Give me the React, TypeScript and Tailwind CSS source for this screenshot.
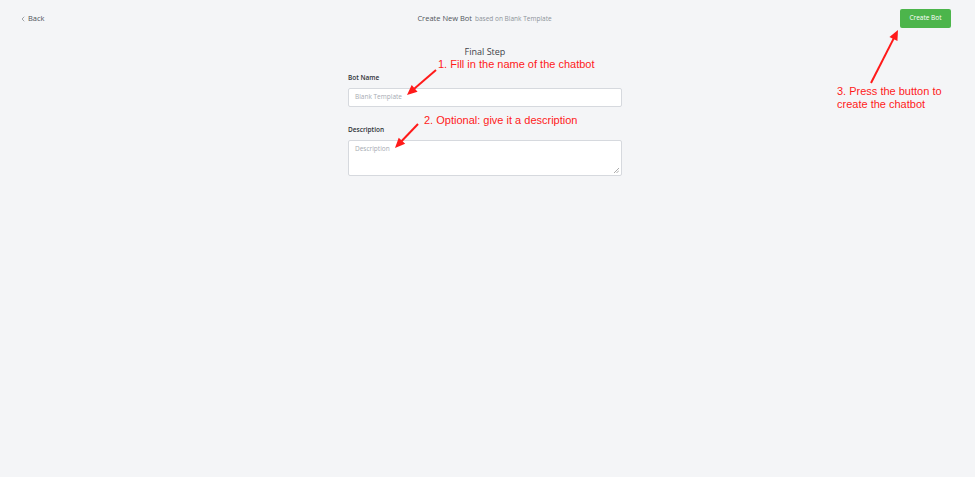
import { ChevronLeft } from 'lucide-react';

function Arrow({ x1, y1, x2, y2 }: { x1: number; y1: number; x2: number; y2: number }) {
  const ang = Math.atan2(y2 - y1, x2 - x1);
  const len = 11;
  const w = 0.42;
  const ax = x2 - len * Math.cos(ang - w);
  const ay = y2 - len * Math.sin(ang - w);
  const bx = x2 - len * Math.cos(ang + w);
  const by = y2 - len * Math.sin(ang + w);
  const sx = x2 - 8 * Math.cos(ang);
  const sy = y2 - 8 * Math.sin(ang);
  return (
    <g>
      <line x1={x1} y1={y1} x2={sx} y2={sy} stroke="#ff1a1a" strokeWidth={2} />
      <polygon points={`${x2},${y2} ${ax},${ay} ${bx},${by}`} fill="#ff1a1a" />
    </g>
  );
}

export default function App() {
  return (
    <div className="relative h-[477px] w-[975px] overflow-hidden bg-[#f4f5f7] font-['Open_Sans',sans-serif] text-[#3a3f45]">
      {/* Header */}
      <div className="flex h-[36px] items-center justify-between px-[19px]">
        <button className="mt-[1px] flex w-[60px] items-center gap-[1px] text-[7.5px] text-[#4f545a]">
          <ChevronLeft className="h-[8px] w-[8px]" strokeWidth={1.5} />
          Back
        </button>
        <div className="mt-[1px] flex items-baseline gap-[3px] -ml-[6px]">
          <span className="text-[7.5px] text-[#51565c]">Create New Bot</span>
          <span className="text-[6.5px] text-[#8d939a]">based on Blank Template</span>
        </div>
        <div className="w-[60px] flex justify-end">
          <button className="mr-[5px] h-[19px] w-[51px] rounded-[2px] bg-[#4cb54b] text-[6.5px] text-white">
            Create Bot
          </button>
        </div>
      </div>

      {/* Form */}
      <div className="mt-[10px] ml-[348px] w-[274px]">
        <div className="text-center text-[9px] leading-[12px] text-[#3e434a]">Final Step</div>
        <label className="mt-[15px] block text-[6.5px] font-semibold text-[#2f3338]">Bot Name</label>
        <div className="mt-[5px] flex h-[19px] items-center rounded-[2px] border border-[#d6d9de] bg-white px-[6px] text-[6.5px] text-[#a6abb2]">
          Blank Template
        </div>
        <label className="mt-[18px] block text-[6.5px] font-semibold text-[#2f3338]">Description</label>
        <div className="relative mt-[5px] h-[36px] rounded-[2px] border border-[#d6d9de] bg-white px-[6px] pt-[3px] text-[6.5px] text-[#a6abb2]">
          Description
          <svg className="absolute bottom-[2px] right-[2px]" width="5" height="5" viewBox="0 0 5 5">
            <line x1="0" y1="5" x2="5" y2="0" stroke="#888" strokeWidth="0.7" />
            <line x1="2.5" y1="5" x2="5" y2="2.5" stroke="#888" strokeWidth="0.7" />
          </svg>
        </div>
      </div>

      {/* Annotations */}
      <svg className="pointer-events-none absolute left-0 top-0" width="975" height="477">
        <Arrow x1={436} y1={70} x2={407} y2={95} />
        <Arrow x1={418} y1={124} x2={395} y2={148} />
        <Arrow x1={871} y1={83} x2={898} y2={30} />
      </svg>
      <div className="absolute left-[438px] top-[58px] font-['Liberation_Sans',Arial,sans-serif] text-[11px] leading-[13px] text-[#ff1a1a]">
        1. Fill in the name of the chatbot
      </div>
      <div className="absolute left-[424px] top-[114px] font-['Liberation_Sans',Arial,sans-serif] text-[11px] leading-[13px] text-[#ff1a1a]">
        2. Optional: give it a description
      </div>
      <div className="absolute left-[837px] top-[85px] font-['Liberation_Sans',Arial,sans-serif] text-[11px] leading-[13px] text-[#ff1a1a]">
        3. Press the button to
        <br />
        create the chatbot
      </div>
    </div>
  );
}
